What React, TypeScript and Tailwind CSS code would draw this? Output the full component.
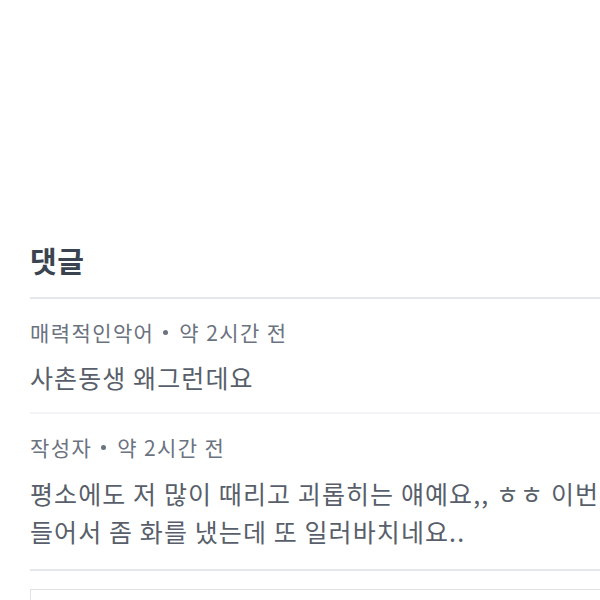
export default function App() {
  const font = { fontFamily: '"Noto Sans CJK KR", "Noto Sans", sans-serif' };

  return (
    <div className="w-[600px] h-[600px] overflow-hidden bg-white" style={font}>
      <div className="w-[630px] pl-[30px] pt-[238px]">
        {/* 댓글 header */}
        <h2 className="text-[29px] leading-[44px] font-bold tracking-[0.5px] text-[#3a4350]">댓글</h2>
        <div className="mt-[15px] h-[2px] bg-[#e4e7ec]" />

        {/* comment 1 */}
        <div className="pt-[19px] pb-[16px]">
          <div className="flex items-center text-[21px] leading-[28px] tracking-[1.4px] text-[#6b7280]">
            <span>매력적인악어</span>
            <span className="ml-[9px] mr-[11px] w-[5px] h-[5px] rounded-full bg-[#6b7280]" />
            <span>약 2시간 전</span>
          </div>
          <p className="mt-[12px] text-[25px] leading-[38px] tracking-[1.1px] text-[#585f6b]">사촌동생 왜그런데요</p>
        </div>
        <div className="h-[2px] bg-[#f3f4f6]" />

        {/* comment 2 */}
        <div className="pt-[19px] pb-[19px]">
          <div className="flex items-center text-[21px] leading-[28px] tracking-[1.4px] text-[#6b7280]">
            <span>작성자</span>
            <span className="ml-[9px] mr-[11px] w-[5px] h-[5px] rounded-full bg-[#6b7280]" />
            <span>약 2시간 전</span>
          </div>
          <p className="mt-[13px] text-[25px] leading-[38px] tracking-[1.1px] text-[#585f6b] break-keep">
            평소에도 저 많이 때리고 괴롭히는 얘예요,, ㅎㅎ 이번 들어서 좀 화를 냈는데 또 일러바치네요..
          </p>
        </div>
        <div className="h-[2px] bg-[#e4e7ec]" />

        {/* reply box */}
        <div className="mt-[18px] h-[60px] border border-[#dfe3e8] bg-white" />
      </div>
    </div>
  );
}
